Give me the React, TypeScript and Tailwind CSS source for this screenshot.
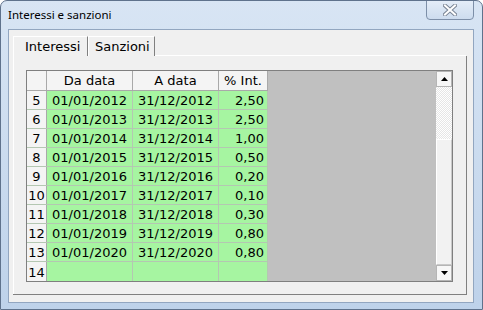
import React from "react";

const ROWS = [
  { n: 5, from: "01/01/2012", to: "31/12/2012", rate: "2,50" },
  { n: 6, from: "01/01/2013", to: "31/12/2013", rate: "2,50" },
  { n: 7, from: "01/01/2014", to: "31/12/2014", rate: "1,00" },
  { n: 8, from: "01/01/2015", to: "31/12/2015", rate: "0,50" },
  { n: 9, from: "01/01/2016", to: "31/12/2016", rate: "0,20" },
  { n: 10, from: "01/01/2017", to: "31/12/2017", rate: "0,10" },
  { n: 11, from: "01/01/2018", to: "31/12/2018", rate: "0,30" },
  { n: 12, from: "01/01/2019", to: "31/12/2019", rate: "0,80" },
  { n: 13, from: "01/01/2020", to: "31/12/2020", rate: "0,80" },
  { n: 14, from: "", to: "", rate: "" },
];

function CloseGlyph() {
  return (
    <svg width="14" height="12" viewBox="0 0 14 12">
      <path d="M2 1.5 L12 10.5 M12 1.5 L2 10.5" stroke="#7b8696" strokeWidth="4" strokeLinecap="square" />
      <path d="M2 1.5 L12 10.5 M12 1.5 L2 10.5" stroke="#ffffff" strokeWidth="2" strokeLinecap="square" />
    </svg>
  );
}

function Arrow({ up }: { up?: boolean }) {
  return (
    <svg width="7" height="4" viewBox="0 0 7 4">
      <path d={up ? "M0 4 L3.5 0 L7 4 Z" : "M0 0 L7 0 L3.5 4 Z"} fill="#000" />
    </svg>
  );
}

function Grid() {
  return (
    <div className="flex h-[212px] w-[427px] border border-[#7f7f7f] font-['DejaVu_Sans',sans-serif] text-[13px] text-black">
      <div className="flex w-[241px] flex-col">
        <div className="flex h-[20px] border-b border-[#a9a9a9] bg-[#f4f4f4]">
          <div className="w-[20px] border-r border-[#a9a9a9]" />
          <div className="flex w-[86px] items-center justify-center border-r border-[#a9a9a9] pt-px">Da data</div>
          <div className="flex w-[86px] items-center justify-center border-r border-[#a9a9a9] pt-px">A data</div>
          <div className="flex w-[49px] items-center justify-center border-r border-[#a9a9a9] pt-px">% Int.</div>
        </div>
        {ROWS.map((r) => (
          <div key={r.n} className="flex h-[19px] border-b border-[#b4c7b2] last:border-b-0">
            <div className="flex w-[20px] items-center justify-center border-r border-[#a9a9a9] bg-[#f4f4f4] pt-[2px]">
              {r.n}
            </div>
            <div className="flex w-[86px] items-center justify-center border-r border-[#b4c7b2] bg-[#a6f5a1] pt-[2px]">
              {r.from}
            </div>
            <div className="flex w-[86px] items-center justify-center border-r border-[#b4c7b2] bg-[#a6f5a1] pt-[2px]">
              {r.to}
            </div>
            <div className="flex w-[49px] items-center justify-end border-r border-[#b4c7b2] bg-[#a6f5a1] pr-[3px] pt-[2px]">
              {r.rate}
            </div>
          </div>
        ))}
      </div>
      <div className="flex-1 bg-[#c0c0c0]" />
      <div className="flex w-[16px] flex-col">
        <div className="flex h-[16px] items-center justify-center border border-[#b5b5b5] bg-[#f7f7f7]">
          <Arrow up />
        </div>
        <div className="h-[52px] bg-[repeating-conic-gradient(#ffffff_0_25%,#e6e6e6_0_50%)] bg-size-[2px_2px]" />
        <div className="flex-1 border border-[#c9c9c9] border-l-white border-t-white bg-[#f2f2f2]" />
        <div className="flex h-[16px] items-center justify-center border border-[#b5b5b5] bg-[#f7f7f7]">
          <Arrow />
        </div>
      </div>
    </div>
  );
}

export default function App() {
  return (
    <div className="relative h-[310px] w-[483px] overflow-hidden rounded-t-[7px] border border-[#5f728c] bg-linear-to-b from-[#d8e5f4] to-[#bed2ea] px-[7px] pb-[6px] pt-[28px] pr-[8px]">
      <div className="absolute left-[7px] top-[6px] font-['Noto_Sans',sans-serif] text-[11.5px] leading-[16px] text-black">
        Interessi e sanzioni
      </div>
      <div className="absolute left-[425px] top-[-1px] flex h-[20px] w-[48px] items-center justify-center rounded-b-[4px] border border-[#7d8fa8] bg-linear-to-b from-[#e4edf8] to-[#cddcee]">
        <CloseGlyph />
      </div>

      <div className="h-[274px] w-[466px] border border-[#92a6c0] bg-[#f0f0f0] pl-[4px] pt-[6px]">
        <div className="flex h-[20px] font-['DejaVu_Sans',sans-serif] text-[13px] text-black">
          <div className="flex w-[75px] items-center border-l border-t border-r border-l-white border-t-white border-r-[#808080] pl-[11px] pt-px">
            Interessi
          </div>
          <div className="flex w-[67px] items-center border-l border-t border-r border-l-white border-t-white border-r-[#808080] pl-[6px] pt-px">
            Sanzioni
          </div>
          <div className="flex-1" />
        </div>
        <div className="flex h-[239px] w-[454px] border-r border-b border-[#808080]">
          <div className="flex-1 border-l border-white pl-[12px] pt-[14px]">
            <div className="relative">
              <div className="absolute left-[129px] top-[-15px] h-px w-[311px] bg-white" />
            </div>
            <Grid />
          </div>
        </div>
      </div>
    </div>
  );
}
